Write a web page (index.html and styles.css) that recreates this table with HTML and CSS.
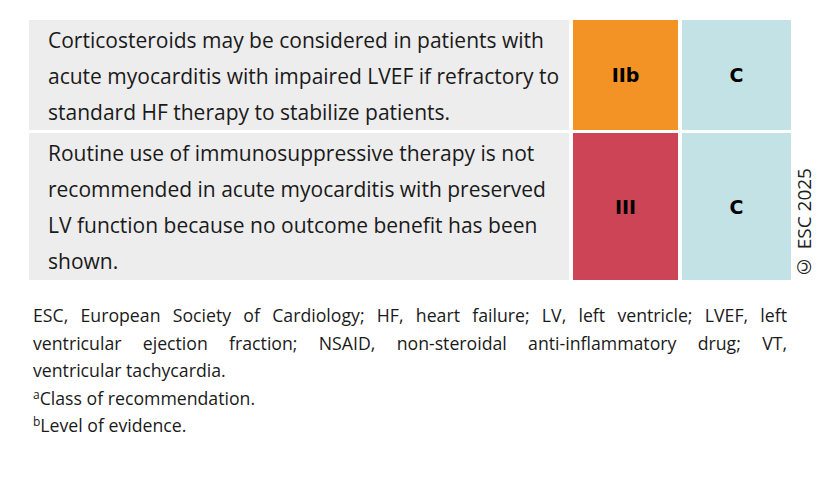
FILE: index.html
```html
<!DOCTYPE html>
<html>
<head>
<meta charset="utf-8">
<link rel="stylesheet" href="styles.css">
</head>
<body>
<div class="page">
  <div class="top">
    <div class="table">
      <div class="cell text">Corticosteroids may be considered in patients with acute myocarditis with impaired LVEF if refractory to standard HF therapy to stabilize patients.</div>
      <div class="cell grade orange">IIb</div>
      <div class="cell grade blue">C</div>
      <div class="cell text">Routine use of immunosuppressive therapy is not recommended in acute myocarditis with preserved LV function because no outcome benefit has been shown.</div>
      <div class="cell grade red">III</div>
      <div class="cell grade blue">C</div>
    </div>
    <div class="copy">© ESC 2025</div>
  </div>
  <div class="notes">
    <p class="just">ESC, European Society of Cardiology; HF, heart failure; LV, left ventricle; LVEF, left ventricular ejection fraction; NSAID, non-steroidal anti-inflammatory drug; VT, ventricular&nbsp;tachycardia.</p>
    <p><sup>a</sup>Class of recommendation.</p>
    <p><sup>b</sup>Level of evidence.</p>
  </div>
</div>
</body>
</html>
```
FILE: styles.css
```css
html, body { margin: 0; padding: 0; background: #fff; }
body { font-family: "Open Sans", "Noto Sans", sans-serif; color: #111; }
.page { padding: 20px 0 0 29px; width: 797px; }
.top { display: flex; align-items: flex-end; }
.table {
  display: grid;
  grid-template-columns: 540px 105px 109px;
  grid-template-rows: 110px 147px;
  column-gap: 4px;
  row-gap: 3px;
}
.cell { box-sizing: border-box; }
.text {
  background: #ededed;
  padding: 2px 0 0 19px;
  font-size: 21px;
  line-height: 36px;
  color: #1a1a1a;
}
.grade {
  display: flex; align-items: center; justify-content: center;
  font-family: "DejaVu Sans", sans-serif; font-weight: bold; font-size: 19px; color: #000;
}
.orange { background: #f39325; }
.red { background: #cc4455; }
.blue { background: #c2e2e6; }
.copy {
  writing-mode: vertical-rl;
  transform: rotate(180deg);
  font-size: 19px;
  color: #222;
  margin-left: 4px;
  margin-bottom: 0;
  line-height: 19px;
}
.notes {
  margin: 22px 0 0 4px;
  width: 754px;
  font-size: 17.7px;
  line-height: 27.5px;
  color: #1a1a1a;
}
.notes p { margin: 0; }
.just { text-align: justify; }
sup { font-size: 12px; vertical-align: 0; position: relative; top: -6px; line-height: 0; }
```
